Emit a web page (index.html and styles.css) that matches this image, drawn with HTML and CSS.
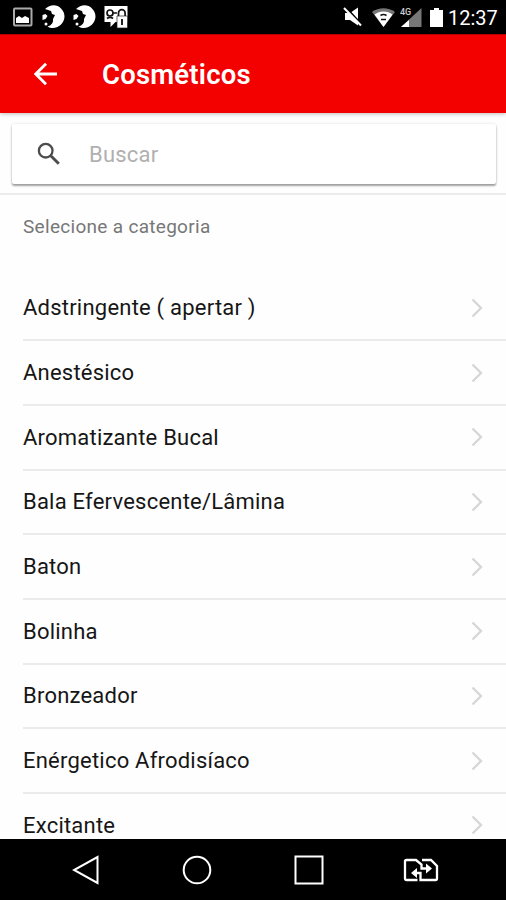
FILE: index.html
```
<!DOCTYPE html>
<html lang="pt-BR">
<head>
<meta charset="utf-8">
<title>Cosméticos</title>
<link rel="stylesheet" href="styles.css">
</head>
<body>
<div class="statusbar">
  <svg class="st-left" width="130" height="34" viewBox="0 0 130 34">
    <rect x="14" y="8.500" width="17.500" height="17" rx="1" fill="none" stroke="#aaa" stroke-width="2"/>
    <path d="M16 23v-5l3-2 3 2 3-2 4 2v5z" fill="#fff"/>
    <g id="globe" fill="#fff"><path d="M45 9C50 4 57 4 61 8.500c5 5 4.500 12-.5 16.500-4 3.500-9 4-13 1.500 4-1 6-4 5.500-7.500l2-4-3-1-1-3z"/><path d="M42.500 15l3-1 2 2-2 3-3 1z"/><circle cx="46" cy="24" r="1.500"/></g>
    <use href="#globe" x="31"/>
    <path d="M104.500 6h23v16h-12l-5 5v-5h-6z" fill="#fff"/>
    <g fill="none" stroke="#111" stroke-width="1.700"><circle cx="110" cy="13" r="3"/><path d="M107 18.500c2-1.500 4-1.500 6 0M113 13h4"/><path d="M118.500 17v-4a3.300 3.300 0 0 1 6.600 0v4"/></g>
    <path d="M117 16h10.500v12H117z" fill="#fff" stroke="#222" stroke-width=".7"/><path d="M121 19h2v6h-2z" fill="#222"/>
  </svg>
  <svg class="st-right" width="104" height="34" viewBox="0 0 104 34">
    <path d="M5 13h5l8-5.500v18L10 20H5z" fill="#fff"/><path d="M5.500 7l16 17.500" stroke="#000" stroke-width="2"/><path d="M4 8l17 17.500" stroke="#fff" stroke-width="2"/>
    <path d="M32 12c7-5 16-5 23 0L43.500 27z" fill="#777"/><path d="M34.500 14.500c5-4 13-4 18 0L43.500 27z" fill="#fff"/><path d="M40.500 15.500q3-2 6 0M41 19.500h5" fill="none" stroke="#111" stroke-width="1.600"/>
    <path d="M81.500 8v19H61z" fill="#777"/><path d="M69 20v7h-8z" fill="#fff"/>
    <text x="60" y="14.500" class="net">4G</text>
    <path d="M90 10h4V8h5v2h4v17H90z" fill="#fff"/>
  </svg>
  <span class="clock">12:37</span>
</div>
<header class="appbar">
  <svg class="back" width="24" height="24" viewBox="0 0 24 24"><path d="M23 12H2.500M12 1.800L1.800 12 12 22.200" fill="none" stroke="#fff" stroke-width="2.900"/></svg>
  <h1>Cosméticos</h1>
</header>
<div class="searchzone">
  <div class="searchbox">
    <svg class="mag" width="24" height="24" viewBox="0 0 24 24"><circle cx="8.700" cy="8.700" r="6.800" fill="none" stroke="#4c4c4c" stroke-width="2.300"/><path d="M13.500 13.500l8.300 8.300" stroke="#4c4c4c" stroke-width="2.900"/></svg>
    <span class="placeholder">Buscar</span>
  </div>
</div>
<main>
  <h2>Selecione a categoria</h2>
  <ul>
    <li><span>Adstringente ( apertar )</span><svg class="chev" viewBox="0 0 12 20"><path d="M1.500 1.500L10 10l-8.500 8.500"/></svg></li>
    <li><span>Anestésico</span><svg class="chev" viewBox="0 0 12 20"><path d="M1.500 1.500L10 10l-8.500 8.500"/></svg></li>
    <li><span>Aromatizante Bucal</span><svg class="chev" viewBox="0 0 12 20"><path d="M1.500 1.500L10 10l-8.500 8.500"/></svg></li>
    <li><span>Bala Efervescente/Lâmina</span><svg class="chev" viewBox="0 0 12 20"><path d="M1.500 1.500L10 10l-8.500 8.500"/></svg></li>
    <li><span>Baton</span><svg class="chev" viewBox="0 0 12 20"><path d="M1.500 1.500L10 10l-8.500 8.500"/></svg></li>
    <li><span>Bolinha</span><svg class="chev" viewBox="0 0 12 20"><path d="M1.500 1.500L10 10l-8.500 8.500"/></svg></li>
    <li><span>Bronzeador</span><svg class="chev" viewBox="0 0 12 20"><path d="M1.500 1.500L10 10l-8.500 8.500"/></svg></li>
    <li><span>Enérgetico Afrodisíaco</span><svg class="chev" viewBox="0 0 12 20"><path d="M1.500 1.500L10 10l-8.500 8.500"/></svg></li>
    <li><span>Excitante</span><svg class="chev" viewBox="0 0 12 20"><path d="M1.500 1.500L10 10l-8.500 8.500"/></svg></li>
  </ul>
</main>
<nav class="navbar">
  <svg width="28" height="30" viewBox="0 0 28 30"><path d="M25.500 2v26L2 15z" fill="none" stroke="#fff" stroke-width="2"/></svg>
  <svg width="30" height="30" viewBox="0 0 30 30"><circle cx="15" cy="15" r="13.300" fill="none" stroke="#fff" stroke-width="2"/></svg>
  <svg width="30" height="30" viewBox="0 0 30 30"><rect x="1.500" y="1.500" width="27" height="27" fill="none" stroke="#fff" stroke-width="2"/></svg>
  <svg width="36" height="30" viewBox="0 0 36 30"><g fill="none" stroke="#fff" stroke-width="2.300"><path d="M14.500 25H3.500Q2 25 2 23.500V6.500Q2 5 3.500 5H13l5.500 4.500v4H24"/><path d="M19 5h9l6 6v12.500q0 1.500-1.500 1.500H17.500v-7H12"/></g><path d="M23 8.500l6 5-6 5zM14 13l-6 5 6 5z" fill="#fff"/></svg>
</nav>
</body>
</html>
```
FILE: styles.css
```
* { box-sizing: border-box; }
body {
  margin: 0;
  height: 900px;
  overflow: hidden;
  display: flex;
  flex-direction: column;
  background: #fefefe;
  font-family: Roboto, "Liberation Sans", sans-serif;
}
svg { flex: none; display: block; }
.statusbar {
  flex: none;
  height: 34px;
  display: flex;
  background: #000;
  color: #fff;
}
.st-right { margin-left: 210px; }
.net { font-size: 9px; font-weight: 500; fill: #ccc; }
.clock {
  margin-left: 4px;
  font-size: 20px;
  line-height: 36px;
}
.appbar {
  flex: none;
  height: 79px;
  display: flex;
  align-items: center;
  padding-left: 34px;
  background: #f30000;
  border-top: 1px solid #b90000;
  box-shadow: 0 1px 4px rgba(0, 0, 0, .25);
  z-index: 1;
}
.appbar h1 {
  margin: 0 0 0 44px;
  color: #fff;
  font-size: 27.5px;
  font-weight: 600;
  letter-spacing: .2px;
}
.searchzone {
  flex: none;
  height: 82px;
  padding: 11px 10px 0 12px;
  border-bottom: 2px solid #ececec;
}
.searchbox {
  height: 60px;
  display: flex;
  align-items: center;
  padding-left: 25px;
  background: #fff;
  border-radius: 2px;
  box-shadow: 0 2px 2px rgba(0, 0, 0, .35), 0 0 3px rgba(0, 0, 0, .12);
}
.placeholder {
  margin-left: 28px;
  font-size: 22px;
  letter-spacing: .2px;
  color: #b0b0b0;
}
main { flex: 1; min-height: 0; overflow: hidden; }
h2 {
  margin: 0;
  height: 81.5px;
  padding-left: 23px;
  font-size: 19px;
  font-weight: 400;
  letter-spacing: .3px;
  line-height: 63px;
  color: #777;
}
ul { margin: 0; padding: 0 0 0 23px; list-style: none; }
li {
  height: 64.7px;
  display: flex;
  align-items: center;
  justify-content: space-between;
  padding-right: 23px;
  border-bottom: 2px solid #ebebeb;
  font-size: 22px;
  letter-spacing: .22px;
  color: #161616;
}
.chev { width: 12px; height: 20px; fill: none; stroke: #d6d6d6; stroke-width: 2.300; }
.navbar {
  flex: none;
  height: 61px;
  display: flex;
  align-items: center;
  padding-left: 72px;
  background: #000;
}
.navbar svg + svg { margin-left: 82px; }
.navbar svg:last-child { margin-left: 79px; }
```
